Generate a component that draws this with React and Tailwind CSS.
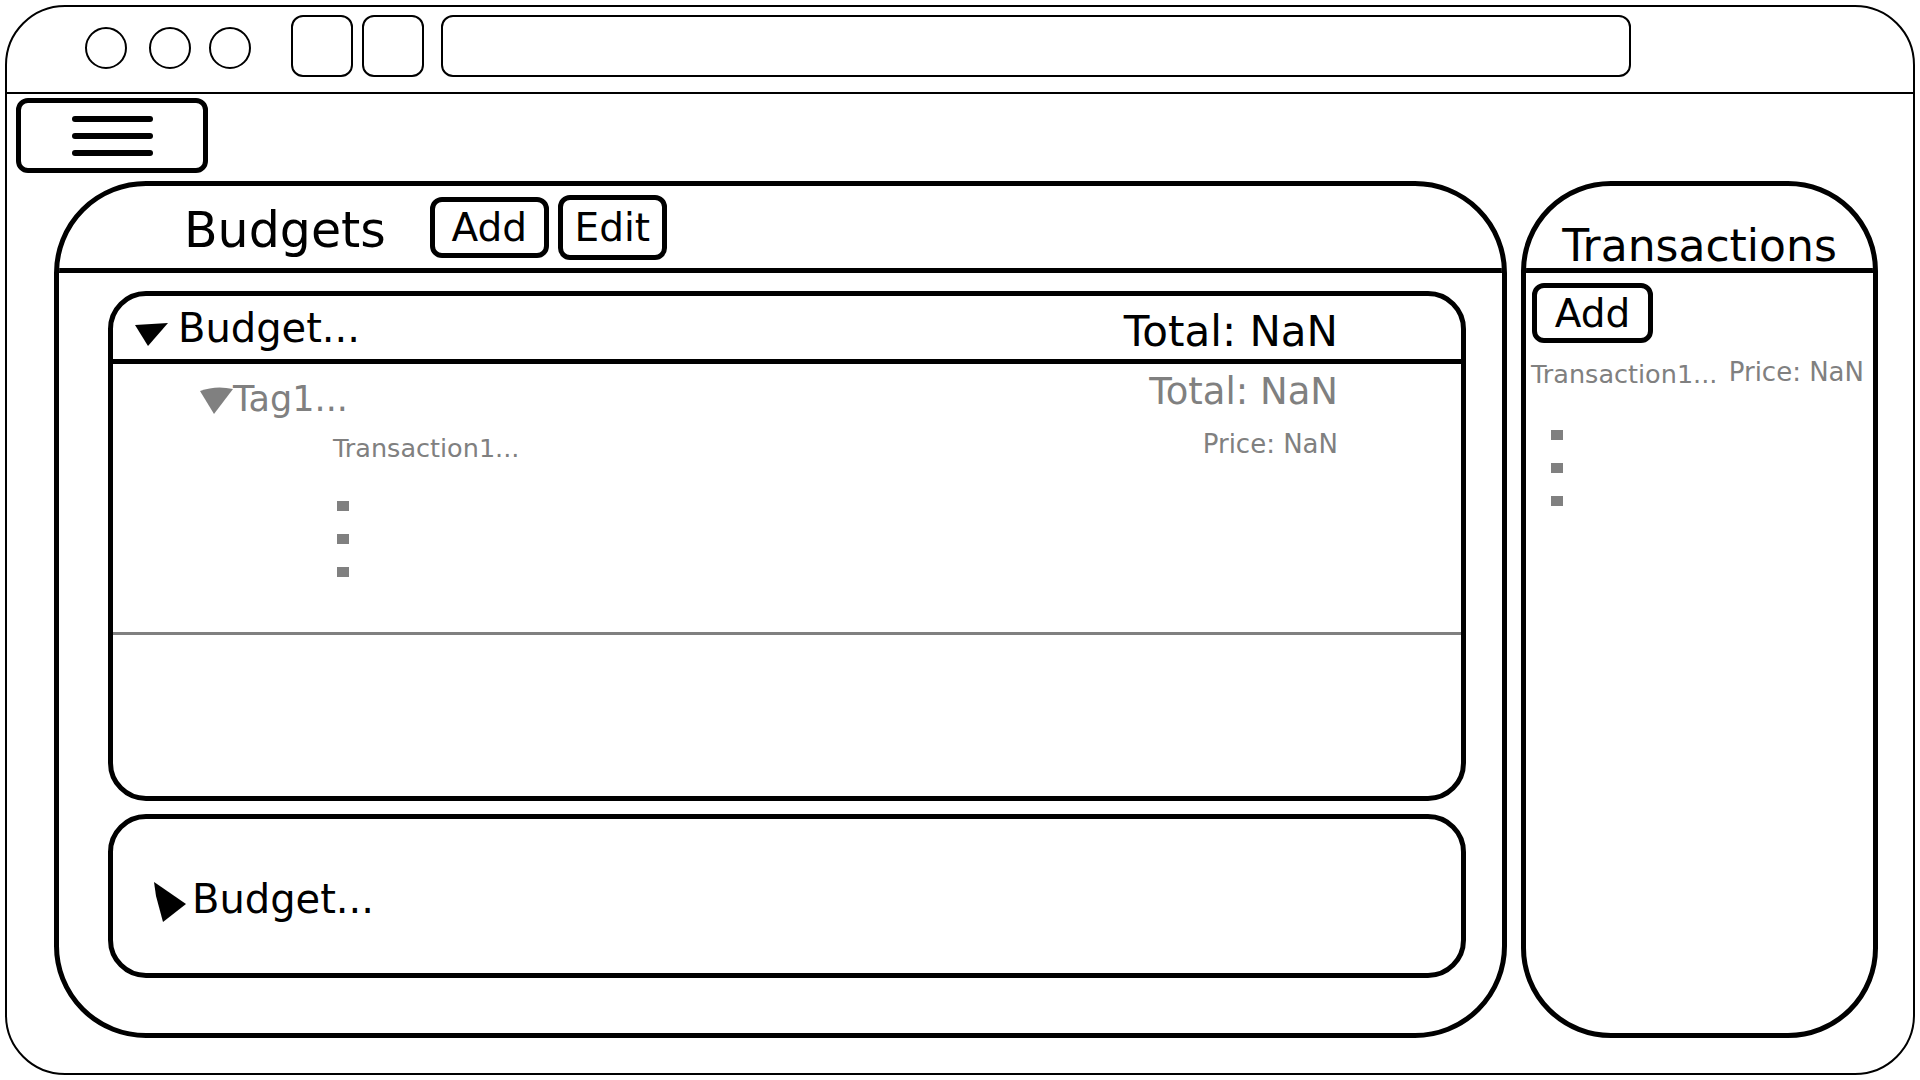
export default function App() {
  return (
    <div className="w-[1920px] h-[1080px] bg-white p-[5px] box-border font-['DejaVu_Sans',sans-serif] text-black">
      <div className="w-full h-full border-2 border-black rounded-[60px] flex flex-col overflow-hidden box-border">
        {/* title bar */}
        <div className="h-[87px] border-b-2 border-black flex items-start shrink-0 box-border">
          <div className="ml-[78px] mt-[20px] w-[42px] h-[42px] rounded-full border-2 border-black box-border" />
          <div className="ml-[22px] mt-[20px] w-[42px] h-[42px] rounded-full border-2 border-black box-border" />
          <div className="ml-[18px] mt-[20px] w-[42px] h-[42px] rounded-full border-2 border-black box-border" />
          <div className="ml-[40px] mt-[8px] w-[62px] h-[62px] rounded-[12px] border-2 border-black box-border" />
          <div className="ml-[9px] mt-[8px] w-[62px] h-[62px] rounded-[12px] border-2 border-black box-border" />
          <div className="ml-[17px] mt-[8px] w-[1190px] h-[62px] rounded-[12px] border-2 border-black box-border" />
        </div>

        {/* menu button */}
        <div className="ml-[9px] mt-[4px] w-[192px] h-[75px] border-[5px] border-black rounded-[12px] flex flex-col items-center justify-center gap-[11px] box-border shrink-0">
          <div className="w-[81px] h-[6px] bg-black rounded-full" />
          <div className="w-[81px] h-[6px] bg-black rounded-full" />
          <div className="w-[81px] h-[6px] bg-black rounded-full" />
        </div>

        {/* panels */}
        <div className="flex mt-[8px] ml-[47px] gap-[14px] shrink-0">
          {/* Budgets */}
          <div className="w-[1453px] h-[857px] border-[5px] border-black rounded-[92px] flex flex-col overflow-hidden box-border">
            <div className="h-[87px] border-b-[5px] border-black flex items-center pl-[125px] box-border shrink-0">
              <span className="text-[49px] leading-none mt-[6px]">Budgets</span>
              <div className="ml-[44px] w-[119px] h-[61px] border-[5px] border-black rounded-[12px] flex items-center justify-center text-[39px] leading-none box-border">
                Add
              </div>
              <div className="ml-[9px] w-[109px] h-[65px] border-[5px] border-black rounded-[12px] flex items-center justify-center text-[39px] leading-none box-border">
                Edit
              </div>
            </div>

            <div className="flex flex-col pl-[49px] pr-[36px] pt-[18px] gap-[13px]">
              {/* Budget card 1 */}
              <div className="h-[510px] border-[5px] border-black rounded-[38px] flex flex-col overflow-hidden box-border">
                <div className="h-[68px] border-b-[5px] border-black flex items-center pl-[22px] pr-[123px] box-border shrink-0">
                  <svg width="33" height="24" viewBox="0 0 33 24" className="mt-[12px] shrink-0">
                    <path d="M0,3 L33,1 L13,24 Z" fill="black" />
                  </svg>
                  <span className="ml-[10px] text-[40px] leading-none">Budget...</span>
                  <span className="ml-auto mt-[8px] text-[42px] leading-none">Total: NaN</span>
                </div>

                <div className="flex flex-col text-[#808080]">
                  <div className="flex items-start pl-[87px] pr-[123px] pt-[13px]">
                    <svg width="33" height="28" viewBox="0 0 33 28" className="mt-[9px] shrink-0">
                      <path d="M0,5 Q16,-1 33,3 L14,28 Z" fill="#808080" />
                    </svg>
                    <span className="text-[35px] leading-none mt-[5px]">Tag1...</span>
                    <span className="ml-auto text-[37px] leading-none mt-[-4px]">Total: NaN</span>
                  </div>
                  <div className="flex items-start pl-[220px] pr-[123px] mt-[14px]">
                    <span className="text-[25.5px] leading-none mt-[5px]">Transaction1...</span>
                    <span className="ml-auto text-[26px] leading-none">Price: NaN</span>
                  </div>
                  <div className="flex flex-col pl-[224px] mt-[39px] gap-[23px]">
                    <div className="w-[12px] h-[10px] bg-[#808080]" />
                    <div className="w-[12px] h-[10px] bg-[#808080]" />
                    <div className="w-[12px] h-[10px] bg-[#808080]" />
                  </div>
                  <div className="mt-[55px] h-[3px] bg-[#808080]" />
                </div>
              </div>

              {/* Budget card 2 */}
              <div className="h-[164px] border-[5px] border-black rounded-[38px] flex items-center pl-[41px] box-border">
                <svg width="32" height="40" viewBox="0 0 32 40" className="mt-[12px] shrink-0">
                  <path d="M0,0 L3,2 L32,22 L9,40 L2,14 Z" fill="black" />
                </svg>
                <span className="ml-[6px] mt-[5px] text-[40px] leading-none">Budget...</span>
              </div>
            </div>
          </div>

          {/* Transactions */}
          <div className="w-[357px] h-[857px] border-[5px] border-black rounded-[90px] flex flex-col overflow-hidden box-border">
            <div className="h-[87px] border-b-[5px] border-black flex items-end justify-center box-border shrink-0">
              <span className="text-[44px] leading-none">Transactions</span>
            </div>
            <div className="ml-[6px] mt-[10px] w-[121px] h-[60px] border-[5px] border-black rounded-[12px] flex items-center justify-center text-[39px] leading-none box-border">
              Add
            </div>
            <div className="flex items-start pl-[5px] pr-[9px] mt-[16px] text-[#808080]">
              <span className="text-[25.5px] leading-none mt-[3px]">Transaction1...</span>
              <span className="ml-auto text-[26px] leading-none">Price: NaN</span>
            </div>
            <div className="flex flex-col pl-[25px] mt-[42px] gap-[23px]">
              <div className="w-[12px] h-[10px] bg-[#808080]" />
              <div className="w-[12px] h-[10px] bg-[#808080]" />
              <div className="w-[12px] h-[10px] bg-[#808080]" />
            </div>
          </div>
        </div>
      </div>
    </div>
  );
}
